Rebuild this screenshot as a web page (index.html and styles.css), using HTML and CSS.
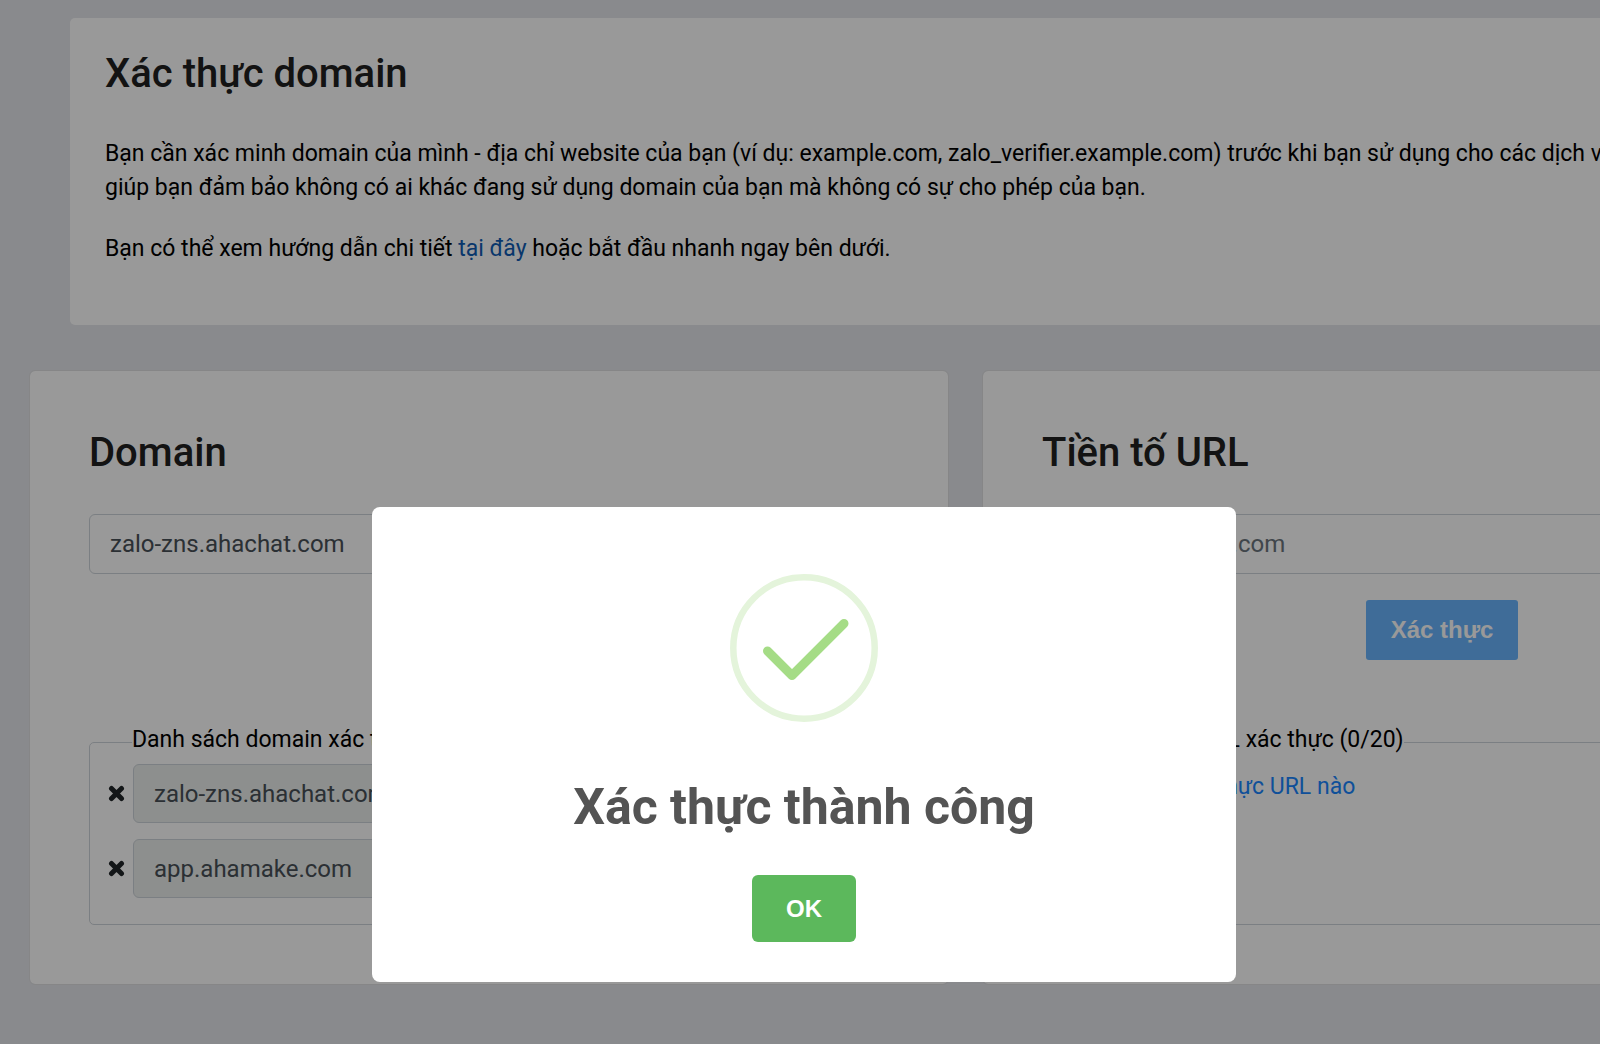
FILE: index.html
```html
<!DOCTYPE html>
<html lang="vi">
<head>
<meta charset="utf-8">
<title>Xác thực domain</title>
<link rel="stylesheet" href="styles.css">
</head>
<body>
<main class="page">
  <section class="card intro">
    <h1 class="heading">Xác thực domain</h1>
    <p class="text">Bạn cần xác minh domain của mình - địa chỉ website của bạn (ví dụ: example.com, zalo_verifier.example.com) trước khi bạn sử dụng cho các dịch vụ của Zalo. Việc này giúp bạn đảm bảo không có ai khác đang sử dụng domain của bạn mà không có sự cho phép của bạn.</p>
    <p class="text">Bạn có thể xem hướng dẫn chi tiết <a class="guide-link" href="#guide">tại đây</a> hoặc bắt đầu nhanh ngay bên dưới.</p>
  </section>
  <div class="columns">
    <section class="card panel">
      <h2 class="heading"><label for="domain">Domain</label></h2>
      <input class="field" id="domain" type="text" value="zalo-zns.ahachat.com">
      <button class="verify" type="button">Xác thực</button>
      <fieldset class="list">
        <legend class="legend">Danh sách domain xác thực (2/20)</legend>
        <div class="row">
          <button class="remove" type="button" aria-label="Xóa zalo-zns.ahachat.com">
            <svg class="cross" viewBox="0 0 17 17" aria-hidden="true"><path d="M3.500 3.500L13.500 13.500M13.500 3.500L3.500 13.500"/></svg>
          </button>
          <input class="field" type="text" aria-label="Domain 1" value="zalo-zns.ahachat.com" readonly>
        </div>
        <div class="row">
          <button class="remove" type="button" aria-label="Xóa app.ahamake.com">
            <svg class="cross" viewBox="0 0 17 17" aria-hidden="true"><path d="M3.500 3.500L13.500 13.500M13.500 3.500L3.500 13.500"/></svg>
          </button>
          <input class="field" type="text" aria-label="Domain 2" value="app.ahamake.com" readonly>
        </div>
      </fieldset>
    </section>
    <section class="card panel">
      <h2 class="heading"><label for="prefix">Tiền tố URL</label></h2>
      <input class="field" id="prefix" type="text" placeholder="https://example.com">
      <button class="verify" type="button">Xác thực</button>
      <fieldset class="list">
        <legend class="legend">Danh sách URL xác thực (0/20)</legend>
        <a class="empty" href="#prefix">Chưa có xác thực URL nào</a>
      </fieldset>
    </section>
  </div>
</main>
<div class="overlay">
  <div class="dialog" role="dialog" aria-modal="true" aria-labelledby="dialog-title">
    <svg class="success" viewBox="0 0 148 148" aria-hidden="true">
      <circle class="ring" cx="74" cy="74" r="70.700"/>
      <path class="tick" d="M37.500 77L62 101.500L114 49.500"/>
    </svg>
    <h2 class="dialog-title" id="dialog-title">Xác thực thành công</h2>
    <button class="ok" type="button">OK</button>
  </div>
</div>
</body>
</html>
```

FILE: styles.css
```css
* {
  box-sizing: border-box;
}

body {
  margin: 0;
  min-height: 100vh;
  overflow: hidden;
  background: #e4e6eb;
  color: #000;
  font: 400 23px/34px Roboto, "Noto Sans", sans-serif;
}

.page {
  min-width: 1931px;
  padding: 18px 30px 60px;
}

.card {
  background: #fff;
  border-radius: 5px;
}

.heading {
  margin: 0;
  color: #212121;
  font-size: 40px;
  font-weight: 500;
  line-height: 48px;
}

.intro {
  margin: 0 40px 46px;
  padding: 32px 35px 32px;
}

.intro .heading {
  margin-bottom: 39px;
}

.text {
  margin: 0 0 27px;
}

.guide-link {
  color: #0f5cb4;
  text-decoration: none;
}

.columns {
  display: grid;
  grid-template-columns: 1fr 1fr;
  gap: 35px;
}

.panel {
  display: flex;
  flex-direction: column;
  padding: 58px 59px 59px;
  outline: 1px solid #dfe0e2;
}

.panel .heading {
  margin-bottom: 37px;
}

.field {
  width: 100%;
  height: 60px;
  padding: 0 20px;
  border: 1px solid #ced4da;
  border-radius: 6px;
  background: #fff;
  color: #495057;
  font: inherit;
  font-size: 24px;
}

.field::placeholder {
  color: #6c757d;
  opacity: 1;
}

.verify {
  align-self: center;
  width: 152px;
  height: 60px;
  margin: 26px 0 65px;
  padding: 0;
  border: 0;
  border-radius: 3px;
  background: #69b5fe;
  color: #fff;
  font: 700 24px/34px "Liberation Sans", Arial, sans-serif;
}

.list {
  flex: 1;
  min-width: 0;
  margin: 0;
  padding: 5px 19px 26px 18px;
  border: 1px solid #ced4da;
  border-radius: 5px;
}

.legend {
  margin-left: 24px;
  padding: 0 0 4px;
  line-height: 30px;
}

.row {
  display: flex;
  align-items: center;
  gap: 8px;
}

.row + .row {
  margin-top: 16px;
}

.row .field {
  height: 59px;
  background: #ebeeed;
}

.remove {
  display: flex;
  padding: 0;
  border: 0;
  background: none;
}

.cross {
  width: 17px;
  height: 17px;
  fill: none;
  stroke: #212529;
  stroke-width: 5;
  stroke-linecap: round;
}

.empty {
  display: block;
  margin: 6px 0 0 24px;
  color: #1a86ff;
  text-decoration: none;
}

.overlay {
  position: fixed;
  inset: 0;
  display: flex;
  justify-content: center;
  align-items: flex-start;
  padding: 507px 0 0 8px;
  background: rgba(0, 0, 0, 0.4);
}

.dialog {
  display: flex;
  flex-direction: column;
  align-items: center;
  width: 864px;
  padding: 67px 34px 40px;
  border-radius: 8px;
  background: #fff;
}

.success {
  width: 148px;
  height: 148px;
  fill: none;
}

.ring {
  stroke: #e4f4db;
  stroke-width: 6.500;
}

.tick {
  stroke: #a5dc86;
  stroke-width: 9;
  stroke-linecap: round;
  stroke-linejoin: round;
}

.dialog-title {
  margin: 55px 0 38px;
  color: #545454;
  font-size: 50px;
  font-weight: 700;
  line-height: 60px;
}

.ok {
  width: 104px;
  height: 67px;
  padding: 0;
  border: 0;
  border-radius: 6px;
  background: #5cb85c;
  color: #fff;
  font: 700 24px/34px "Liberation Sans", Arial, sans-serif;
}
```
